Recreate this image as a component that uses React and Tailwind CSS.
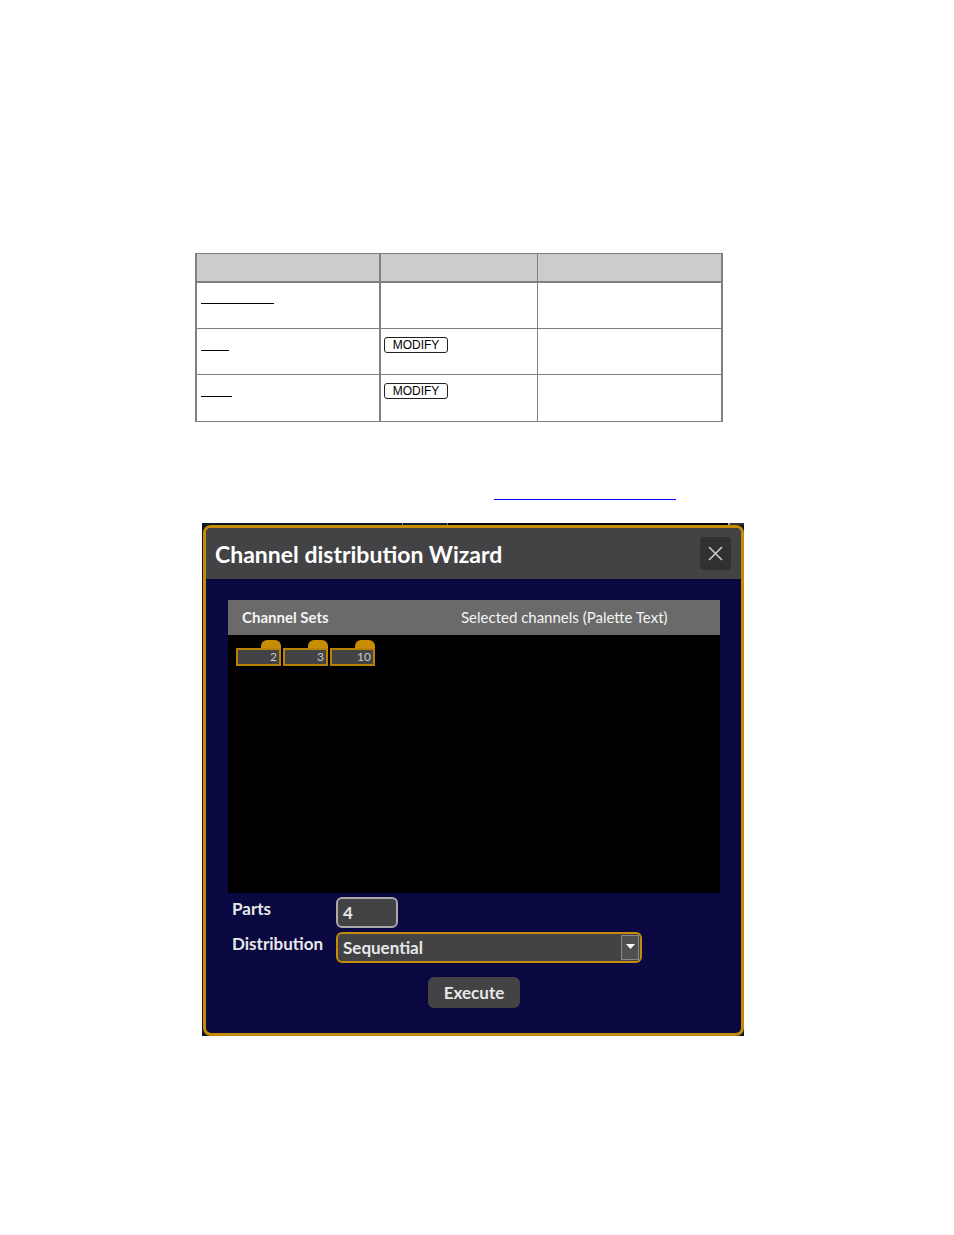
import React from "react";
import { useState } from "react";

const rows = [
  { name: "Sequential", width: "w-[73px]", height: "h-[21px]", key: null },
  { name: "Even", width: "w-[28px]", height: "h-[22px]", key: "MODIFY" },
  { name: "Odd", width: "w-[31px]", height: "h-[22px]", key: "MODIFY" },
];

const channelSets = ["2", "3", "10"];

const KeyCap = ({ children }) => (
  <span className="flex h-4 w-16 items-center justify-center rounded-[3px] border border-[#222] font-['Liberation_Sans',sans-serif] text-[12px] leading-none text-black">
    {children}
  </span>
);

const FunctionTable = () => (
  <table className="w-full max-w-[528px] table-fixed border-separate border-spacing-0 border-l-2 border-[#808080]">
    <colgroup>
      <col className="w-[184px]" />
      <col className="w-[157px]" />
      <col />
    </colgroup>
    <thead>
      <tr className="h-[30px] bg-[#ccc]">
        <th className="border-t border-r-2 border-b-2 border-[#808080]"></th>
        <th className="border-t border-r border-b-2 border-[#808080]"></th>
        <th className="border-t border-r-2 border-b-2 border-[#808080]"></th>
      </tr>
    </thead>
    <tbody>
      {rows.map((row) => (
        <tr key={row.name} className="h-[46px] last:h-[47px]">
          <td className="border-r-2 border-b border-[#808080] px-1 align-top">
            <a
              href="#"
              aria-label={row.name}
              className={`block border-b border-black ${row.width} ${row.height}`}
            ></a>
          </td>
          <td className="border-r border-b border-[#808080] px-[3px] pt-2 align-top">
            {row.key && <KeyCap>{row.key}</KeyCap>}
          </td>
          <td className="border-r-2 border-b border-[#808080]"></td>
        </tr>
      ))}
    </tbody>
  </table>
);

const ChannelSet = ({ value }) => (
  <div className="flex w-[45px] flex-col items-end">
    <div className="h-2 w-5 rounded-t-md bg-[#c88c05]"></div>
    <div className="h-[18px] w-full border-2 border-[#b98105] bg-[#434345] pr-[2px] text-right text-[12px] leading-[14px] text-[#ccc]">
      {value}
    </div>
  </div>
);

const WizardDialog = () => {
  const [parts, setParts] = useState("4");
  const [distribution, setDistribution] = useState("Sequential");

  return (
    <div className="w-full max-w-[542px] bg-[#101626] pl-px font-['Lato',sans-serif]">
      <div className="flex h-[2px] justify-end">
        <div className="w-[46px] border-x border-[#777] bg-[#102030]"></div>
        <div className="w-[280px] bg-black"></div>
        <div className="w-4 border-l-2 border-[#aaa] bg-[#333]"></div>
      </div>
      <section className="overflow-hidden rounded-lg border-[3px] border-[#c58b05] bg-[#090840]">
        <header className="flex h-[51px] items-center justify-between bg-[#434345] pr-[10px] pl-[9px]">
          <h1 className="text-[23px] leading-7 font-bold text-white">
            Channel distribution Wizard
          </h1>
          <button
            type="button"
            aria-label="Close"
            className="flex h-[33px] w-[31px] items-center justify-center rounded bg-[#303132]"
          >
            <svg width="15" height="15" viewBox="0 0 15 15" fill="none">
              <path d="M1 1 14 14M14 1 1 14" stroke="#ccc" strokeWidth="1.6" />
            </svg>
          </button>
        </header>

        <div className="pt-[21px] pr-[21px] pb-[25px] pl-[22px]">
          <div className="flex h-[35px] items-center bg-[#6a6a6a] text-[15px] text-[#f4f4f4]">
            <h2 className="w-[233px] pl-[14px] font-bold">Channel Sets</h2>
            <p>Selected channels (Palette Text)</p>
          </div>
          <div className="flex h-[258px] gap-[2px] bg-black pt-[5px] pl-2">
            {channelSets.map((value) => (
              <ChannelSet key={value} value={value} />
            ))}
          </div>

          <form
            className="pt-1 pl-1 text-[17px] font-bold text-[#e8e8e8]"
            onSubmit={(e) => e.preventDefault()}
          >
            <div className="flex">
              <label htmlFor="parts" className="w-[104px] leading-6">
                Parts
              </label>
              <input
                id="parts"
                value={parts}
                onChange={(e) => setParts(e.target.value)}
                className="h-[31px] w-[62px] rounded-md border-2 border-[#aaa] bg-[#434345] px-[5px]"
              />
            </div>
            <div className="mt-1 flex">
              <label htmlFor="distribution" className="w-[104px] leading-6">
                Distribution
              </label>
              <div className="relative w-full max-w-[306px]">
                <select
                  id="distribution"
                  value={distribution}
                  onChange={(e) => setDistribution(e.target.value)}
                  className="h-[31px] w-full appearance-none rounded-md border-2 border-[#c58b05] bg-[#434345] px-[5px]"
                >
                  <option>Sequential</option>
                  <option>Even</option>
                  <option>Odd</option>
                </select>
                <span className="pointer-events-none absolute top-[3px] right-[3px] flex h-[25px] w-[18px] items-center justify-center border border-[#888] bg-[#505052] pb-[2px]">
                  <svg width="9" height="5" viewBox="0 0 9 5">
                    <path d="M0 0h9L4.5 5z" fill="#fff" />
                  </svg>
                </span>
              </div>
            </div>
            <div className="mt-[14px] flex justify-center pr-1">
              <button
                type="submit"
                className="h-[31px] w-[92px] rounded-md bg-[#434345]"
              >
                Execute
              </button>
            </div>
          </form>
        </div>
      </section>
    </div>
  );
};

const App = () => {
  return (
    <main className="bg-white pt-[253px] pr-6 pb-[199px] pl-[195px]">
      <FunctionTable />
      <p className="pt-[77px] pl-[299px]">
        <a
          href="#"
          aria-label="Channel distribution"
          className="block w-[182px] border-b border-[#00f]"
        ></a>
      </p>
      <div className="pt-[23px] pl-[7px]">
        <WizardDialog />
      </div>
    </main>
  );
};

export default App;
